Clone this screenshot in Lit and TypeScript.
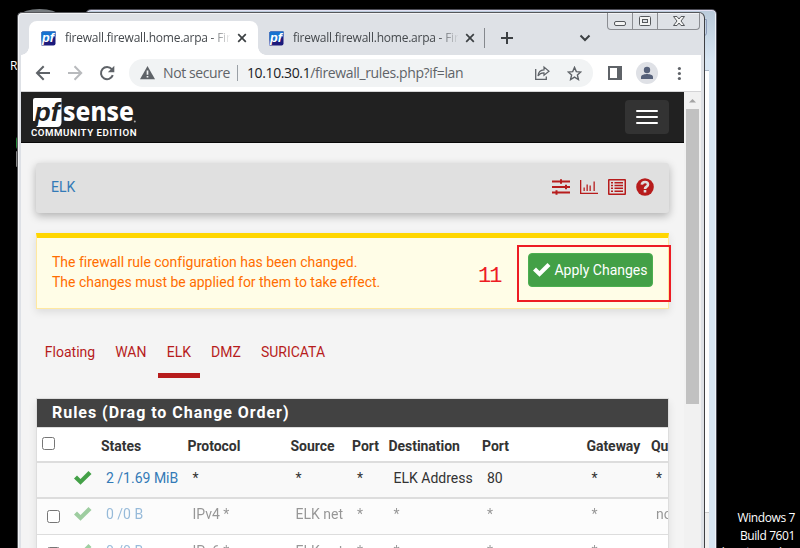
import { LitElement, html, css } from "lit";
import { customElement, property } from "lit/decorators.js";
import { classMap } from "lit/directives/class-map.js";

const checkPath = "M1 8.5 L4 5.5 L7.5 9 L15.5 1 L18.5 4 L7.5 14.8 Z";

const check = html`<svg class="check" width="19" height="16" viewBox="0 0 19 16"><path d=${checkPath}></path></svg>`;

const favicon = html`<svg class="fav" width="16" height="16" viewBox="0 0 16 16">
  <path d="M1.5 0.5H14.5V12.5Q14.5 14.5 12.5 14.5H0.5V1.5Z" fill="#1b1a7c"></path>
  <path d="M1.5 0.5H14.5V5L9 10L0.5 9.5V1.5Z" fill="#1673d0"></path>
  <text x="1" y="11.3" font-family="Liberation Sans" font-weight="700" font-style="italic" font-size="12.5" fill="#fff">pf</text>
</svg>`;

@customElement("browser-tab")
class BrowserTab extends LitElement {
  @property({ type: Boolean, reflect: true }) active = false;
  static styles = css`
    :host { display: flex; align-items: center; box-sizing: border-box; width: 228px; height: 34px; padding: 0 10px 0 12px; color: #45494d; }
    :host([active]) { width: 229px; background: #fff; border-radius: 8px 8px 0 0; }
    .fav { flex: none; margin-top: 1px; }
    .label { flex: none; width: 165px; margin-left: 8px; overflow: hidden; white-space: nowrap; font: 12px/18px "Open Sans", sans-serif; letter-spacing: -0.23px;
      -webkit-mask-image: linear-gradient(90deg, #000 145px, transparent 166px); }
    .close { flex: none; margin-left: 7px; }
  `;
  render() {
    return html`${favicon}<span class="label">firewall.firewall.home.arpa - Firewall</span>
      <svg class="close" width="10" height="10" viewBox="0 0 10 10"><path d="M1.2 1.2L8.8 8.8M8.8 1.2L1.2 8.8" stroke="#3c4043" stroke-width="1.7"></path></svg>`;
  }
}

@customElement("rules-table")
class RulesTable extends LitElement {
  static styles = css`
    :host { display: block; box-sizing: border-box; width: 633px; height: 160px; overflow: hidden; background: #fff; border: 1px solid #ddd; border-bottom: 0;
      box-shadow: 0 4px 8px rgba(0,0,0,.09); font: 14px/20px Roboto, sans-serif; color: #333; }
    .title { height: 28px; box-sizing: border-box; padding: 0 15px; background: #424242; color: #fff; font-weight: 700; font-size: 16px; line-height: 27px; letter-spacing: .97px; }
    .row { display: grid; grid-template-columns: 32px 27px 86.5px 103px 61.5px 36.5px 93.5px 104.5px 64.5px 80px; box-sizing: border-box; align-items: center; white-space: nowrap; height: 36px; border-bottom: 2px solid #ddd; }
    .row span { padding-left: 10px; }
    .head { font-weight: 700; border-top: 1px solid #ddd; font-size: 14px; }
    .head span { padding-left: 5px; padding-top: 3px; letter-spacing: -.05px; }
    .r0 { background: #f9f9f9; }
    .r1 { background: #fcfcfc; border-bottom-width: 1px; }
    .row.body { padding-bottom: 4px; }
    .row.r0 { padding-bottom: 4px; }
    .row.r1 { padding-bottom: 5px; }
    .row.r2 { padding-bottom: 2px; }
    .link { color: #337ab7; }
    .faded span, .faded .check { opacity: .5; }
    .check { fill: #43a047; margin-left: 4px; }
    .box { box-sizing: border-box; width: 13px; height: 13px; border: 1px solid #767676; border-radius: 2.5px; background: #fff; margin-left: 10px; margin-top: 4px; }
    .head .box { margin: -3px 0 0 5px; }
  `;
  render() {
    const heads = ["", "States", "Protocol", "Source", "Port", "Destination", "Port", "Gateway", "Queue"];
    const rows = [
      ["2 /1.69 MiB", "*", "*", "*", "ELK Address", "80", "*", "*"],
      ["0 /0 B", "IPv4 *", "ELK net", "*", "*", "*", "*", "none"],
      ["0 /0 B", "IPv6 *", "ELK net", "*", "*", "*", "*", "none"],
    ];
    return html`<div class="title">Rules (Drag to Change Order)</div>
      <div class="row head"><i class="box"></i>${heads.map((h) => html`<span>${h}</span>`)}</div>
      ${rows.map((r, i) => html`<div class=${classMap({ row: true, body: true, ["r" + i]: true, faded: i > 0 })}>
        ${i ? html`<i class="box"></i>` : html`<i></i>`}${check}
        ${r.map((c, j) => html`<span class=${j ? "" : "link"}>${c}</span>`)}
      </div>`)}`;
  }
}

@customElement("app-root")
class AppRoot extends LitElement {
  static styles = css`
    :host { display: block; position: relative; width: 800px; height: 548px; overflow: hidden; background: #000; font-family: Roboto, sans-serif; }
    .bin { position: absolute; left: 21px; top: 9px; width: 37px; height: 12px; border-radius: 50%; background: #777c80; }
    .iconlabel { position: absolute; left: 10px; top: 57px; font: 12px/18px "Open Sans", sans-serif; color: #fff; }
    .sliver { position: absolute; left: 16px; top: 136px; width: 8px; height: 14px; border-radius: 4px; background: #278a3a; }
    .sliver2 { position: absolute; left: 16px; top: 151px; width: 4px; height: 16px; background: #888; border-radius: 1px; }
    .build { position: absolute; right: 5px; top: 509px; display: flex; flex-direction: column; align-items: flex-end; white-space: nowrap; color: #fff; font: 12px/18px "Open Sans", sans-serif; letter-spacing: -.4px; }
    .build .last { margin-top: -2px; }
    .back { position: absolute; box-sizing: border-box; left: 85px; top: 9px; width: 632px; height: 545px; border: 1px solid #4b4b55; border-radius: 6px 5px 0 0; background: linear-gradient(#b9cada, #d7e5f2 50px); box-shadow: inset 0 1px #e3e1f4, inset -1px 0 #eef3f8; }
    .backbtn { position: absolute; right: 9px; top: 9px; width: 12px; height: 17px; border: 1px solid #8d9cba; border-radius: 0 0 3px 0; box-sizing: border-box; }
    .backpage { position: absolute; right: 7px; top: 60px; width: 30px; height: 441px; background: #fff; border-top: 1px solid #a9b6c6; border-bottom: 1px solid #ccc; }
    .backfoot { position: absolute; right: 7px; top: 503px; width: 30px; height: 60px; background: #f0f0f0; }
    .win { position: absolute; left: 17px; top: 12px; width: 688px; height: 540px; box-sizing: border-box; border: 1px solid #55565a; border-right-color: #3f4044; border-radius: 5px 6px 0 0; background: #dee1e6; overflow: hidden; box-shadow: inset 1px 1px #f2f3f5; }
    .tabs { display: flex; align-items: center; height: 42px; padding: 8px 0 0 11px; box-sizing: border-box; position: relative; }
    .tabs::before { content: ""; position: absolute; left: 3px; bottom: 0; width: 8px; height: 8px; background: radial-gradient(circle at 0 0, transparent 7.5px, #fff 8px); }
    .tabs::after { content: ""; position: absolute; left: 240px; bottom: 0; width: 8px; height: 8px; background: radial-gradient(circle at 100% 0, transparent 7.5px, #fff 8px); }
    browser-tab + browser-tab { margin-left: -1px; }
    .sep { width: 1px; height: 20px; background: #85888d; margin-left: -1px; }
    .plus { margin-left: 16px; }
    .chev { margin-left: 66px; }
    .controls { position: absolute; right: 4px; top: 0; display: flex; width: 93px; height: 17px; box-sizing: border-box; border: 1px solid #8b8d92; border-top: 0; border-radius: 0 0 4px 4px; }
    .controls svg { display: block; }
    .inner { width: 680px; margin-left: 3px; }
    .toolbar { display: flex; align-items: center; background: #fff; height: 37px; box-sizing: border-box; border-bottom: 1px solid #d4d4d6; }
    .toolbar svg { flex: none; display: block; }
    .nav { margin-left: 14px; }
    .omni { display: flex; align-items: center; box-sizing: border-box; width: 464px; height: 28px; border-radius: 14px; background: #f1f3f4; margin-left: 14px; padding: 0 11px; color: #5f6368; font: 14px/20px "Open Sans", sans-serif; white-space: nowrap; }
    .ns { margin-left: 8px; width: 67px; letter-spacing: -.4px; }
    .bar { width: 1px; height: 16px; background: #9aa0a6; margin: 0 9px 0 7px; }
    .url { flex: 1; letter-spacing: -.38px; }
    .url b { font-weight: 400; color: #202124; }
    .star { margin-left: 17px; }
    .view { display: flex; }
    .page { width: 663px; height: 460px; background: #f4f4f4; }
    .scroll { width: 17px; height: 460px; background: #f1f1f1; display: flex; flex-direction: column; align-items: center; }
    .scroll i { width: 13px; height: 295px; background: #c1c1c1; }
    .navbar { display: flex; justify-content: space-between; align-items: flex-start; height: 51px; box-sizing: border-box; background: #212121; border-bottom: 1px solid #080808; padding: 5px 15px 0 10px; }
    .burger { display: flex; flex-direction: column; justify-content: center; align-items: center; gap: 4px; width: 44px; height: 34px; border-radius: 4px; background: #333; margin-top: 3px; }
    .burger i { width: 22px; height: 2px; background: #fff; border-radius: 1px; }
    .content { padding: 20px 15px 0; display: flex; flex-direction: column; }
    .crumb { display: flex; justify-content: space-between; align-items: center; height: 50px; box-sizing: border-box; background: #e0e0e0; border-radius: 3px; padding: 0 14px 2px 15px; box-shadow: 0 3px 8px rgba(0,0,0,.28); font-size: 14px; color: #337ab7; }
    .crumb div { display: flex; gap: 8px; }
    .alert { display: flex; position: relative; margin-top: 20px; height: 76px; box-sizing: border-box; border: 1px solid #ffe8a0; border-top: 5px solid #ffd600; background: #fffde7; color: #ff6d00; padding: 14px 15px; font-size: 14px; line-height: 20px; box-shadow: 0 3px 8px rgba(0,0,0,.1); }
    .msg { flex: 1; letter-spacing: -.01px; }
    .apply { display: flex; align-items: center; justify-content: center; gap: 3px; box-sizing: border-box; width: 125px; height: 34px; border-radius: 4px; background: #43a047; border: 1px solid #4caf50; color: #fff; font-size: 14px; white-space: nowrap; margin-top: 1px; padding-right: 1px; }
    .apply .check { fill: #fff; }
    .mark { position: absolute; left: 480px; top: 7px; width: 154px; height: 57px; box-sizing: border-box; border: 2px solid #ed1c24; }
    .num { position: absolute; left: 441px; top: 28px; font: 22px/22px "Liberation Mono", monospace; color: #ed1c24; letter-spacing: -2px; }
    .pills { display: flex; margin-top: 31px; height: 38px; color: #b71c1c; font-size: 14px; line-height: 24px; padding-left: .5px; }
    .pills span { box-sizing: border-box; text-align: center; border-bottom: 5px solid transparent; white-space: nowrap; }
    .pills .on { border-bottom-color: #b71c1c; }
    rules-table { margin-top: 20px; }
  `;
  render() {
    return html`
      <i class="bin"></i><span class="iconlabel">R</span><i class="sliver"></i><i class="sliver2"></i>
      <div class="build"><span>Windows 7</span><span>Build 7601</span><span class="last">This copy of Windows is not genuine</span></div>
      <div class="back"><i class="backbtn"></i><i class="backpage"></i><i class="backfoot"></i></div>
      <div class="win">
        <div class="tabs">
          <browser-tab active></browser-tab><browser-tab></browser-tab><i class="sep"></i>
          <svg class="plus" width="12" height="12" viewBox="0 0 12 12"><path d="M6 0V12M0 6H12" stroke="#3c4043" stroke-width="2"></path></svg>
          <svg class="chev" width="12" height="8" viewBox="0 0 12 8"><path d="M1.5 1.5L6 6L10.5 1.5" fill="none" stroke="#3c4043" stroke-width="2"></path></svg>
          <div class="controls"><svg width="91" height="16" viewBox="0 0 91 16" fill="none" stroke="#55585c">
            <path d="M24.5 0V16M49.5 0V16" stroke="#8b8d92"></path>
            <rect x="6.5" y="8.5" width="11" height="4" rx="1.5" fill="#f3f3f3"></rect>
            <rect x="31.5" y="3.5" width="11" height="9" rx="1" fill="#f3f3f3"></rect><rect x="34.5" y="6.5" width="5" height="3" fill="#dee1e6"></rect>
            <path d="M65.5 3.5H69L71 6L73 3.5H76.5L73 8L76.5 12.5H73L71 10L69 12.5H65.5L69 8Z" fill="#f3f3f3"></path>
          </svg></div>
        </div>
        <div class="inner">
          <div class="toolbar">
            <svg class="nav" width="80" height="18" viewBox="0 0 80 18" fill="none" stroke-width="2">
              <path d="M15 9H2.2M8.7 2.3L2 9L8.7 15.7" stroke="#5f6368"></path>
              <path d="M33 9H46M39.5 2.3L46.2 9L39.5 15.7" stroke="#b8babd"></path>
              <path d="M76.8 5.2A6.1 6.1 0 1 0 77.8 11.2" stroke="#5f6368"></path><path d="M79.3 1.8V8.3H72.8Z" fill="#5f6368"></path>
            </svg>
            <div class="omni">
              <svg width="15" height="14" viewBox="0 0 15 14"><path d="M7.5 0L15 13.3H0Z" fill="#5f6368"></path><path d="M7.5 4.5V8.8M7.5 10V11.6" stroke="#f1f3f4" stroke-width="1.7"></path></svg>
              <span class="ns">Not secure</span><i class="bar"></i><span class="url"><b>10.10.30.1</b>/firewall_rules.php?if=lan</span>
              <svg width="16" height="16" viewBox="0 0 16 16" fill="none" stroke="#5f6368" stroke-width="1.3"><path d="M1.7 4V14.3H12.3V11.5"></path><path d="M4 11C4.3 7 7 5 10 4.9V2L15 6.2L10 10.3V7.8C7.5 7.7 5.5 8.7 4 11Z" stroke-width="1.2"></path></svg>
              <svg class="star" width="15" height="15" viewBox="0 0 15 15"><path d="M7.5 1.4L9.3 5.6L13.8 6L10.4 9L11.4 13.5L7.5 11.1L3.6 13.5L4.6 9L1.2 6L5.7 5.6Z" fill="none" stroke="#5f6368" stroke-width="1.4"></path></svg>
            </div>
            <svg width="88" height="24" viewBox="0 0 88 24"><path d="M15 5H29V19H15ZM17 7V17H24V7Z" fill="#5f6368" fill-rule="evenodd"></path>
              <circle cx="54" cy="12" r="11" fill="#dfe1e6"></circle><circle cx="54" cy="9" r="3.2" fill="#56617a"></circle><path d="M48 18V16C48 13.8 52 13 54 13S60 13.8 60 16V18Z" fill="#56617a"></path>
              <g fill="#5f6368"><circle cx="86.4" cy="7.5" r="1.6"></circle><circle cx="86.4" cy="12.5" r="1.6"></circle><circle cx="86.4" cy="17.5" r="1.6"></circle></g></svg>
          </div>
          <div class="view">
            <div class="page">
              <div class="navbar">
                <svg width="110" height="42" viewBox="0 0 110 42">
                  <path d="M4 1H30.5V25Q30.5 30 26 30H5.5L7 24H2V3Q2 1 4 1Z" fill="#fff"></path>
                  <text x="3.6" y="23.5" textLength="25" lengthAdjust="spacingAndGlyphs" font-family="Liberation Sans" font-weight="700" font-style="italic" font-size="25" fill="#212121">pf</text>
                  <text x="32" y="23.8" textLength="71" lengthAdjust="spacingAndGlyphs" font-family="Noto Sans" font-weight="800" font-size="26" fill="#fff">sense</text>
                  <circle cx="103.8" cy="24.5" r="1" fill="#aaa"></circle>
                  <text x="0" y="39" textLength="105.5" font-family="Roboto" font-weight="600" font-size="9.7" fill="#fff">COMMUNITY EDITION</text>
                </svg>
                <div class="burger"><i></i><i></i><i></i></div>
              </div>
              <div class="content">
                <div class="crumb"><span>ELK</span><div>
                  <svg width="20" height="18" viewBox="0 0 20 18" fill="#b71c1c"><path d="M1 2.5H19V4.5H1ZM1 8H19V10H1ZM1 13.5H19V15.5H1ZM9 1.2H11V5.8H9ZM14 6.7H16V11.3H14ZM4.5 12.2H6.5V16.8H4.5Z"></path></svg>
                  <svg width="20" height="18" viewBox="0 0 20 18" fill="#b71c1c"><path d="M1 2H2.3V14.7H19V16H1ZM4.5 9.5H5.8V13H4.5ZM7.5 6.5H8.8V13H7.5ZM10.5 7.5H11.8V13H10.5ZM14.5 3.5H15.8V13H14.5Z"></path></svg>
                  <svg width="20" height="18" viewBox="0 0 20 18" fill="#b71c1c"><path fill-rule="evenodd" d="M2 1H18Q19 1 19 2V16Q19 17 18 17H2Q1 17 1 16V2Q1 1 2 1ZM2.5 2.5V15.5H17.5V2.5Z"></path><path d="M4 4H6V5.5H4ZM4 6.8H6V8.3H4ZM4 9.6H6V11.1H4ZM4 12.4H6V13.9H4ZM7.5 4H16V5.5H7.5ZM7.5 6.8H16V8.3H7.5ZM7.5 9.6H16V11.1H7.5ZM7.5 12.4H16V13.9H7.5Z"></path></svg>
                  <svg width="20" height="18" viewBox="0 0 20 18"><circle cx="10" cy="9" r="8.8" fill="#b71c1c"></circle><path d="M6.8 6.6C7.2 3.2 13 3 13 6.5C13 8.8 10 8.4 10 11" fill="none" stroke="#e0e0e0" stroke-width="2.6"></path><rect x="8.7" y="12" width="2.6" height="2.5" fill="#e0e0e0"></rect></svg>
                </div></div>
                <div class="alert"><div class="msg">The firewall rule configuration has been changed.<br>The changes must be applied for them to take effect.</div>
                  <div class="apply">${check}<span>Apply Changes</span></div>
                  <i class="mark"></i><span class="num">11</span>
                </div>
                <div class="pills">${([["Floating", 67], ["WAN", 54.5], ["ELK", 42], ["DMZ", 52], ["SURICATA", 82]] as [string, number][]).map(
                  ([t, w]) => html`<span class=${t === "ELK" ? "on" : ""} style="width:${w}px">${t}</span>`)}</div>
                <rules-table></rules-table>
              </div>
            </div>
            <div class="scroll"><svg width="17" height="17" viewBox="0 0 17 17"><path d="M5 10.5L8.5 7L12 10.5Z" fill="#a3a3a3"></path></svg><i></i></div>
          </div>
        </div>
      </div>`;
  }
}
